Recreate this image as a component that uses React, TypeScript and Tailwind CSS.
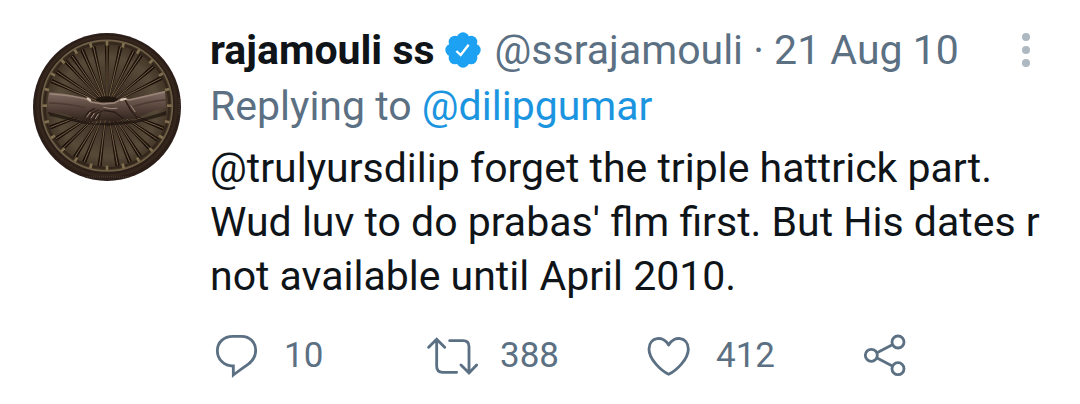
import type { ReactNode } from "react";

const STROKE = "#5b7083";

function polar(angle: number, radius: number) {
  const a = (angle * Math.PI) / 180;
  return { x: 262 + radius * Math.cos(a), y: 258 + radius * Math.sin(a) };
}

const SPOKES = [
  204, 214, 227, 235, 246, 257, 270, 283, 296, 304, 320, 333,
  22, 34, 45, 57, 68, 80, 97, 112, 122, 136, 147, 159,
];
const TEETH = Array.from({ length: 24 }, (_, i) => i * 15);

function Avatar() {
  return (
    <svg viewBox="40 40 444 444" className="size-[148px] shrink-0" role="img" aria-label="rajamouli ss">
      <defs>
        <radialGradient id="plate" cx="262" cy="262" r="200" gradientUnits="userSpaceOnUse">
          <stop offset="0" stopColor="#22170f" />
          <stop offset="0.35" stopColor="#43362a" />
          <stop offset="0.75" stopColor="#574a38" />
          <stop offset="1" stopColor="#3a2d21" />
        </radialGradient>
        <linearGradient id="arm" x1="0" y1="220" x2="0" y2="305" gradientUnits="userSpaceOnUse">
          <stop offset="0" stopColor="#7d695f" />
          <stop offset="0.4" stopColor="#5f4c43" />
          <stop offset="1" stopColor="#30221b" />
        </linearGradient>
        <filter id="soft" x="-10%" y="-10%" width="120%" height="120%">
          <feGaussianBlur stdDeviation="2" />
        </filter>
        <clipPath id="disc">
          <circle cx="262" cy="262" r="222" />
        </clipPath>
      </defs>
      <g clipPath="url(#disc)">
        <rect x="40" y="40" width="444" height="444" fill="#2b1e18" />
        <g filter="url(#soft)">
          <circle cx="262" cy="260" r="208" fill="none" stroke="#35261d" strokeWidth="8" />
          <circle cx="262" cy="258" r="196" fill="url(#plate)" stroke="#6f6046" strokeWidth="5" />
          <circle cx="262" cy="258" r="187" fill="none" stroke="#33261b" strokeWidth="6" />
          {SPOKES.map((angle) => {
            const a = polar(angle, 22);
            const b = polar(angle, 182);
            const left = polar(angle - 1.6, 182);
            const right = polar(angle + 1.6, 182);
            return (
              <g key={angle}>
                <path d={`M${a.x} ${a.y}L${left.x} ${left.y}L${right.x} ${right.y}Z`} fill="#1b110b" stroke="#1b110b" strokeWidth="3" />
                <line x1={a.x} y1={a.y} x2={b.x} y2={b.y} stroke="#756047" strokeWidth="3" />
              </g>
            );
          })}
          {TEETH.map((angle) => {
            const a = polar(angle, 180);
            const b = polar(angle, 194);
            return <line key={angle} x1={a.x} y1={a.y} x2={b.x} y2={b.y} stroke="#807050" strokeWidth="8" />;
          })}
          <path d="M84 276Q140 288 180 302L225 312L300 306L350 302L440 274V286L350 310L270 318L190 312L90 288Z" fill="#1b110c" opacity="0.7" />
          <ellipse cx="262" cy="240" rx="34" ry="10" fill="#1b110c" opacity="0.85" />
        </g>
        <path d="M88 218Q130 221 168 228L204 235L214 244L246 248L282 247L306 236L330 237L374 228L436 213L439 264L400 274L346 297L312 297L288 307L252 301L222 305L202 309L182 300L140 285L82 276L84 242Z" fill="url(#arm)" />
        <g fill="none" strokeLinecap="round" filter="url(#soft)">
          <path d="M92 223Q150 226 202 239L214 247L250 253L284 250L307 238L330 241L434 217" stroke="#9a8578" strokeWidth="4" />
          <path d="M90 250Q150 252 194 264M436 241Q380 246 332 264" stroke="#4b3a31" strokeWidth="5" />
          <path d="M196 292L207 276L225 267M209 297L218 280L237 271M222 299L230 283L248 274M236 299L242 284M316 240L332 270L352 294M252 272L284 277L310 296" stroke="#2b1c15" strokeWidth="4" />
          <path d="M201 292L212 278M214 295L224 281M227 297L236 283M252 263Q275 270 292 266M334 258L346 276" stroke="#a08a7c" strokeWidth="3" />
          <path d="M204 236L212 242M304 241L318 237" stroke="#d8c8b8" strokeWidth="6" />
        </g>
        <path d="M190 472H335" stroke="#65564a" strokeWidth="2" strokeDasharray="3 3" />
        <path d="M478 235V285" stroke="#65564a" strokeWidth="2" strokeDasharray="3 3" />
      </g>
    </svg>
  );
}

const BUMPS = Array.from({ length: 8 }, (_, i) => (i * Math.PI) / 4);

function VerifiedBadge() {
  return (
    <svg viewBox="0 0 108 108" className="size-9 shrink-0" role="img" aria-label="Verified account">
      <g fill="#1da1f2">
        <circle cx="54" cy="54" r="44" />
        {BUMPS.map((a) => (
          <circle key={a} cx={54 + 34 * Math.cos(a)} cy={54 + 34 * Math.sin(a)} r="19" />
        ))}
      </g>
      <path d="M34 57L47 69L71 38" fill="none" stroke="#fff" strokeWidth="7" />
    </svg>
  );
}

function Action({ label, count, children }: { label: string; count?: string; children: ReactNode }) {
  return (
    <button type="button" aria-label={count ? `${count} ${label}` : label} className="flex items-center gap-[22px]">
      <svg viewBox="0 0 156 132" className="h-11 w-[52px] shrink-0" fill="none" stroke={STROKE} strokeWidth="8.5" aria-hidden="true">
        {children}
      </svg>
      {count && <span>{count}</span>}
    </button>
  );
}

export default function App() {
  return (
    <article className="flex gap-[29px] bg-white pt-[23px] pr-9 pb-5 pl-[33px] font-['Roboto',sans-serif] text-[41px] leading-[54px] text-[#0f1419]">
      <div className="shrink-0 pt-[10px]">
        <Avatar />
      </div>
      <div className="min-w-0 flex-1">
        <header className="flex items-center justify-between">
          <div className="flex items-center whitespace-nowrap text-[#5b7083]">
            <strong className="mr-2.5 font-bold text-[#0f1419]">rajamouli ss</strong>
            <VerifiedBadge />
            <span className="ml-3.5">@ssrajamouli · 21 Aug 10</span>
          </div>
          <button type="button" aria-label="More options" className="flex w-9 shrink-0 flex-col items-center gap-[5px]">
            <span className="size-2 rounded-full bg-[#adb8c1]" />
            <span className="size-2 rounded-full bg-[#adb8c1]" />
            <span className="size-2 rounded-full bg-[#adb8c1]" />
          </button>
        </header>
        <p className="mt-[2px] text-[#5b7083]">
          Replying to{" "}
          <a href="#dilipgumar" className="text-[#1b95e0]">
            @dilipgumar
          </a>
        </p>
        <p className="mt-2">
          @trulyursdilip forget the triple hattrick part. Wud luv to do prabas' flm first. But His dates r not available until April 2010.
        </p>
        <footer className="mt-[31px] grid max-w-[700px] grid-cols-[1fr_1fr_1fr_52px] text-[35px] leading-11 text-[#5b7083]">
          <Action label="replies" count="10">
            <path d="M52 7H80C102 7 121 25 121 48C121 68 112 81 98 91Q76 106 54 123V96C28 97 6 77 6 50C6 25 26 7 52 7Z" transform="translate(16 0)" />
          </Action>
          <Action label="retweets" count="388">
            <path d="M8 40L32 16L56 40M32 16V97Q32 115 50 115H92M71 20H111Q129 20 129 38V117M105 93L129 117L152 93" strokeLinecap="round" />
          </Action>
          <Action label="likes" count="412">
            <path d="M80 33C65 5 22 6 21 45C21 76 57 110 80 121C103 110 139 76 139 45C138 6 95 5 80 33Z" strokeLinejoin="round" />
          </Action>
          <Action label="Share">
            <g transform="translate(4 0)">
              <circle cx="36" cy="64" r="18" />
              <circle cx="116" cy="24" r="18" />
              <circle cx="116" cy="104" r="18" />
              <path d="M53 56L99 32M53 72L99 96" />
            </g>
          </Action>
        </footer>
      </div>
    </article>
  );
}
